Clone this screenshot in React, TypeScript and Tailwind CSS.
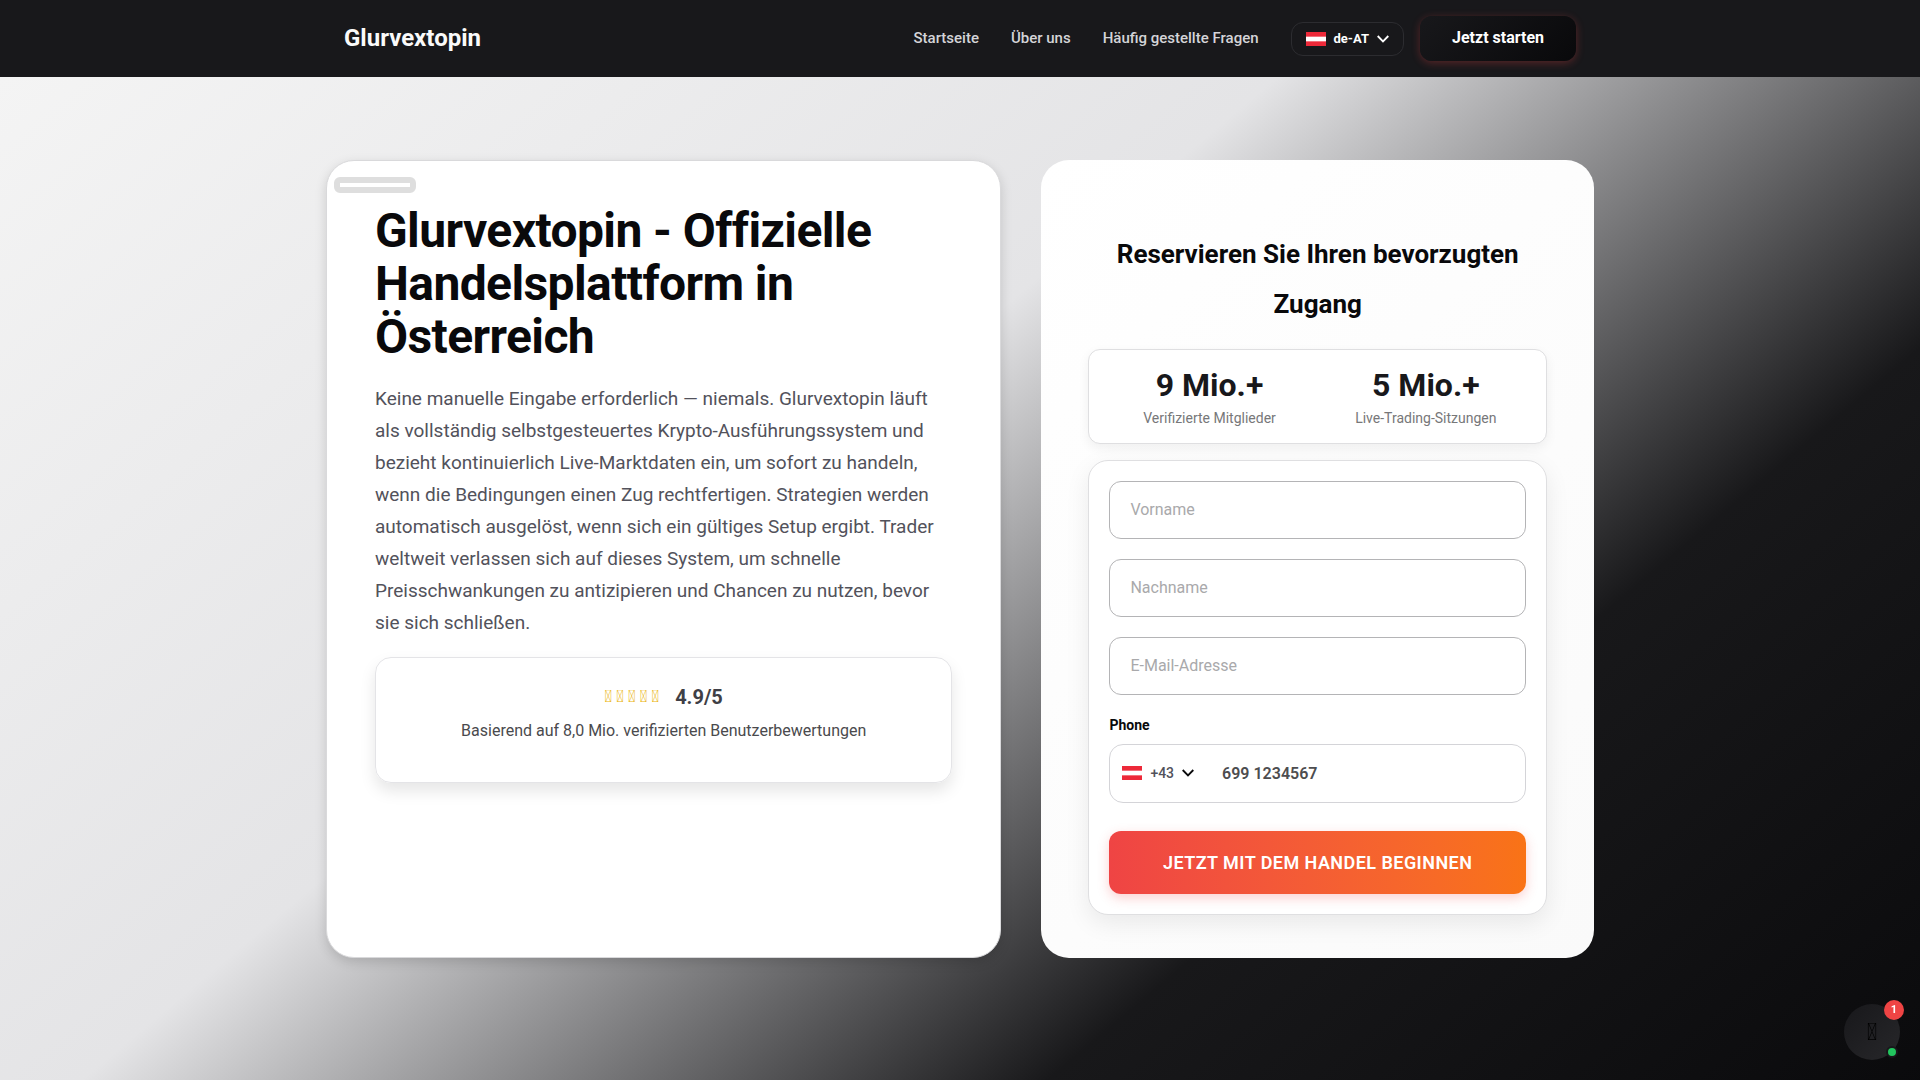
import { FC, useState } from 'react';

const navLinks = [
  { label: 'Startseite', href: '#start' },
  { label: 'Über uns', href: '#about' },
  { label: 'Häufig gestellte Fragen', href: '#faq' }
];

const stats = [
  { value: '9 Mio.+', label: 'Verifizierte Mitglieder' },
  { value: '5 Mio.+', label: 'Live-Trading-Sitzungen' }
];

const fields = [
  { name: 'firstName', type: 'text', label: 'Vorname' },
  { name: 'lastName', type: 'text', label: 'Nachname' },
  { name: 'email', type: 'email', label: 'E-Mail-Adresse' }
];

const FlagAustria: FC = () => (
  <svg className="h-3.5 w-5 shrink-0" viewBox="0 0 20 14" aria-hidden="true">
    <rect width="20" height="14" fill="#ed2939" />
    <rect y="4.67" width="20" height="4.67" fill="#fff" />
  </svg>
);

const Chevron: FC = () => (
  <svg
    className="h-2 w-3 shrink-0"
    viewBox="0 0 12 8"
    fill="none"
    stroke="currentColor"
    strokeWidth="1.8"
    aria-hidden="true"
  >
    <path d="M0.7 1 6 6.4 11.3 1" />
  </svg>
);

const Header: FC = () => (
  <header className="bg-[#18181b]">
    <div className="mx-auto flex h-[77px] max-w-[1280px] items-center justify-between px-6">
      <a href="#start" className="pb-0.5 text-2xl font-bold text-[#fafafa]">
        Glurvextopin
      </a>
      <div className="flex items-center gap-4">
        <nav className="mr-4 flex gap-8">
          {navLinks.map((link) => (
            <a
              key={link.href}
              href={link.href}
              className="text-[15px] font-medium text-[#d4d4d8]"
            >
              {link.label}
            </a>
          ))}
        </nav>
        <button
          type="button"
          className="flex h-[34px] items-center gap-2 rounded-xl border border-[#2c2c30] px-3.5 text-[13px] font-bold text-white"
        >
          <FlagAustria />
          de-AT
          <Chevron />
        </button>
        <button
          type="button"
          className="h-[45px] rounded-xl bg-linear-135 from-[#18181b] to-[#09090b] px-8 pb-px text-base font-bold text-white shadow-[0_2px_8px_rgba(239,68,68,0.3)]"
        >
          Jetzt starten
        </button>
      </div>
    </div>
  </header>
);

const Intro: FC = () => (
  <div className="rounded-[28px] border border-[#d9d9db] bg-white px-12 pt-4 pb-12 shadow-[0_4px_12px_rgba(0,0,0,0.15)]">
    <div className="-ml-[41px] h-4 w-[82px] rounded-md border-6 border-[#dedede] bg-white" />
    <h1 className="mt-[11px] text-5xl leading-[53px] font-bold tracking-[-0.6px] text-[#09090b]">
      Glurvextopin - Offizielle Handelsplattform in Österreich
    </h1>
    <p className="mt-5 text-[19px] leading-8 text-[#52525b]">
      Keine manuelle Eingabe erforderlich — niemals. Glurvextopin läuft als
      vollständig selbstgesteuertes Krypto-Ausführungssystem und bezieht
      kontinuierlich Live-Marktdaten ein, um sofort zu handeln, wenn die
      Bedingungen einen Zug rechtfertigen. Strategien werden automatisch
      ausgelöst, wenn sich ein gültiges Setup ergibt. Trader weltweit verlassen
      sich auf dieses System, um schnelle Preisschwankungen zu antizipieren und
      Chancen zu nutzen, bevor sie sich schließen.
    </p>
    <div className="mt-[18px] flex h-[126px] flex-col items-center rounded-2xl border border-[#e4e4e7] pt-[23px] shadow-[0_8px_16px_rgba(0,0,0,0.1)]">
      <div className="flex items-center gap-4">
        <span className="text-[17px] text-[#eab308]">
          {'\uf005 \uf005 \uf005 \uf005 \uf005'}
        </span>
        <span className="text-xl leading-8 font-bold text-[#3f3f46]">4.9/5</span>
      </div>
      <p className="mt-1 text-base leading-7 text-[#4a4a4d]">
        Basierend auf 8,0 Mio. verifizierten Benutzerbewertungen
      </p>
    </div>
  </div>
);

const SignupForm: FC = () => {
  const [phone, setPhone] = useState('');

  return (
    <form
      className="mt-4 rounded-[20px] border border-[#dfdfe1] bg-white p-5 shadow-[0_8px_24px_rgba(0,0,0,0.08)]"
      onSubmit={(e) => e.preventDefault()}
    >
      <div className="flex flex-col gap-5">
        {fields.map((field) => (
          <input
            key={field.name}
            name={field.name}
            type={field.type}
            aria-label={field.label}
            placeholder={field.label}
            className="h-[58px] w-full rounded-xl border border-[#b4b4b6] px-5 pb-0.5 text-base text-[#18181b] placeholder:text-[#a9a9ab]"
          />
        ))}
      </div>
      <label
        htmlFor="phone"
        className="mt-5 block text-sm leading-5 font-bold text-[#09090b]"
      >
        Phone
      </label>
      <div className="mt-[9px] flex h-[59px] items-center rounded-[14px] border border-[#d4d4d8]">
        <button
          type="button"
          aria-label="+43"
          className="flex items-center gap-2 px-3 pb-px text-sm font-medium text-[#52525b]"
        >
          <FlagAustria />
          +43
          <span className="text-[#09090b]">
            <Chevron />
          </span>
        </button>
        <input
          id="phone"
          type="tel"
          value={phone}
          onChange={(e) => setPhone(e.target.value)}
          placeholder="699 1234567"
          className="h-full min-w-0 flex-1 px-4 text-base font-semibold text-[#18181b] placeholder:text-[#4d4d4f]"
        />
      </div>
      <button
        type="submit"
        className="mt-7 h-[63px] w-full rounded-xl bg-linear-to-r from-[#ef4444] to-[#f97316] text-lg font-semibold tracking-wide text-white uppercase shadow-[0_4px_12px_rgba(239,68,68,0.25)]"
      >
        Jetzt mit dem Handel beginnen
      </button>
    </form>
  );
};

const Signup: FC = () => (
  <div className="rounded-[28px] bg-linear-135 from-white to-[#fafafa] px-[47px] pt-[69px] pb-[43px]">
    <h2 className="text-center text-[26px] leading-[50px] font-bold text-[#09090b]">
      Reservieren Sie Ihren bevorzugten Zugang
    </h2>
    <div className="mt-5 grid grid-cols-2 rounded-xl border border-[#dfdfe1] bg-white px-3 pt-[15px] pb-[13px] text-center shadow-[0_4px_12px_rgba(0,0,0,0.06)]">
      {stats.map((stat) => (
        <div key={stat.label}>
          <div className="text-[32px] leading-10 font-bold text-[#18181b]">
            {stat.value}
          </div>
          <div className="mt-px text-sm leading-6 text-[#777779]">{stat.label}</div>
        </div>
      ))}
    </div>
    <SignupForm />
  </div>
);

const ChatButton: FC = () => (
  <button
    type="button"
    aria-label="Chat"
    className="fixed right-5 bottom-5 flex h-14 w-14 items-center justify-center rounded-full bg-linear-135 from-[#18181b] to-[#27272a] text-2xl text-black"
  >
    {'\uf075'}
    <span className="absolute -top-1 -right-1 flex h-5 w-5 items-center justify-center rounded-full bg-[#ef4444] text-[11px] font-bold text-white">
      1
    </span>
    <span className="absolute right-0.5 bottom-0.5 h-3 w-3 rounded-full border-2 border-[#18181b] bg-[#22c55e]" />
  </button>
);

export default function App() {
  return (
    <div className="flex min-h-screen flex-col font-[Roboto,sans-serif]">
      <Header />
      <main className="flex-1 bg-[linear-gradient(140deg,#f4f4f4_0%,#e4e4e6_41%,#18181a_72%,#09090b_103%)] px-8 pt-[83px] pb-[120px]">
        <div className="mx-auto grid max-w-[1268px] grid-cols-[55fr_45fr] gap-10">
          <Intro />
          <Signup />
        </div>
      </main>
      <ChatButton />
    </div>
  );
}
